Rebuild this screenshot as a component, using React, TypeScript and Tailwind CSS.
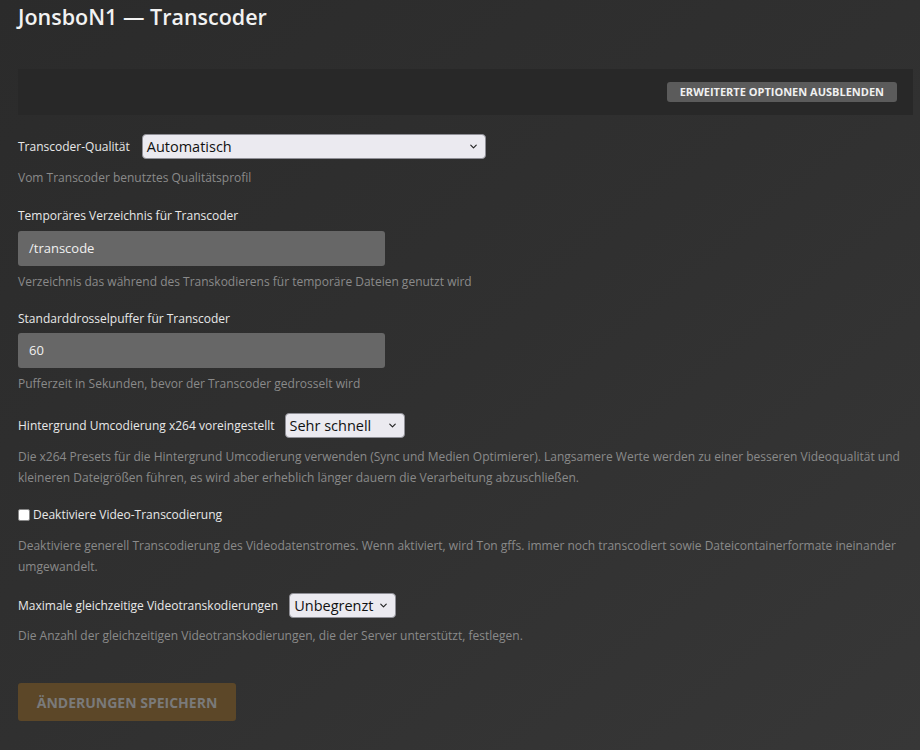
import { ChevronDown } from "lucide-react";

function Select({ value, className }: { value: string; className: string }) {
  return (
    <div
      className={`flex h-[25px] items-center justify-between rounded-[4px] border border-[#8f8f96] bg-[#ebeaf0] pl-[4px] pr-[6px] text-[14.5px] text-[#111] ${className}`}
    >
      <span>{value}</span>
      <ChevronDown size={11} strokeWidth={2.5} className="text-[#222]" />
    </div>
  );
}

function Help({ children, className = "mt-[8px]" }: { children: React.ReactNode; className?: string }) {
  return <p className={`text-[12px] leading-[21px] text-[#8a8a8a] ${className}`}>{children}</p>;
}

export default function App() {
  return (
    <div
      className="min-h-[750px] w-full bg-linear-to-br from-[#2b2b2b] via-[#303030] to-[#373737] pl-[18px] pr-[7px] text-[#e8e8e8]"
      style={{ fontFamily: '"Open Sans", "Noto Sans", sans-serif' }}
    >
      <h1 className="pt-[2px] text-[21.5px] font-semibold leading-[30px] text-[#f2f2f2]">
        JonsboN1 — Transcoder
      </h1>

      {/* advanced options bar */}
      <div className="mt-[37px] flex h-[46px] items-center justify-end bg-[#282828] pr-[16px]">
        <button className="h-[20px] rounded-[3px] bg-[#5b5b5b] px-[13px] text-[11px] font-bold uppercase leading-[20px] text-[#f0f0f0]">
          Erweiterte Optionen ausblenden
        </button>
      </div>

      {/* Transcoder quality */}
      <div className="mt-[19px] flex items-center gap-[12px]">
        <label className="text-[12px]">Transcoder-Qualität</label>
        <Select value="Automatisch" className="w-[344px]" />
      </div>
      <Help>Vom Transcoder benutztes Qualitätsprofil</Help>

      {/* temp directory */}
      <div className="mt-[19px] text-[12px] leading-[18px]">Temporäres Verzeichnis für Transcoder</div>
      <div className="mt-[6px] flex h-[35px] w-[367px] items-center rounded-[3px] bg-[#676767] px-[11px] text-[13px] text-[#f0f0f0]">
        /transcode
      </div>
      <Help className="mt-[5px]">Verzeichnis das während des Transkodierens für temporäre Dateien genutzt wird</Help>

      {/* throttle buffer */}
      <div className="mt-[18px] text-[12px] leading-[18px]">Standarddrosselpuffer für Transcoder</div>
      <div className="mt-[5px] flex h-[35px] w-[367px] items-center rounded-[3px] bg-[#676767] px-[11px] text-[13px] text-[#f0f0f0]">
        60
      </div>
      <Help className="mt-[5px]">Pufferzeit in Sekunden, bevor der Transcoder gedrosselt wird</Help>

      {/* x264 preset */}
      <div className="mt-[19px] flex items-center gap-[10px]">
        <label className="text-[12px]">Hintergrund Umcodierung x264 voreingestellt</label>
        <Select value="Sehr schnell" className="w-[120px]" />
      </div>
      <Help className="mt-[8px]">
        Die x264 Presets für die Hintergrund Umcodierung verwenden (Sync und Medien Optimierer). Langsamere Werte
        werden zu einer besseren Videoqualität und kleineren Dateigrößen führen, es wird aber erheblich länger
        dauern die Verarbeitung abzuschließen.
      </Help>

      {/* disable video transcoding */}
      <label className="mt-[18px] flex items-center gap-[3px] text-[12px]">
        <span className="inline-block h-[12px] w-[12px] rounded-[2px] border border-[#888] bg-white" />
        Deaktiviere Video-Transcodierung
      </label>
      <Help className="mt-[11px]">
        Deaktiviere generell Transcodierung des Videodatenstromes. Wenn aktiviert, wird Ton gffs. immer noch
        transcodiert sowie Dateicontainerformate ineinander umgewandelt.
      </Help>

      {/* max concurrent */}
      <div className="mt-[16px] flex items-center gap-[11px]">
        <label className="text-[12px]">Maximale gleichzeitige Videotranskodierungen</label>
        <Select value="Unbegrenzt" className="h-[24px] w-[107px]" />
      </div>
      <Help className="mt-[7px]">
        Die Anzahl der gleichzeitigen Videotranskodierungen, die der Server unterstützt, festlegen.
      </Help>

      <button className="mt-[37px] h-[38px] w-[218px] rounded-[3px] bg-[#5c4728] text-[14px] font-bold uppercase text-[#7a7a7a]">
        Änderungen speichern
      </button>
    </div>
  );
}
